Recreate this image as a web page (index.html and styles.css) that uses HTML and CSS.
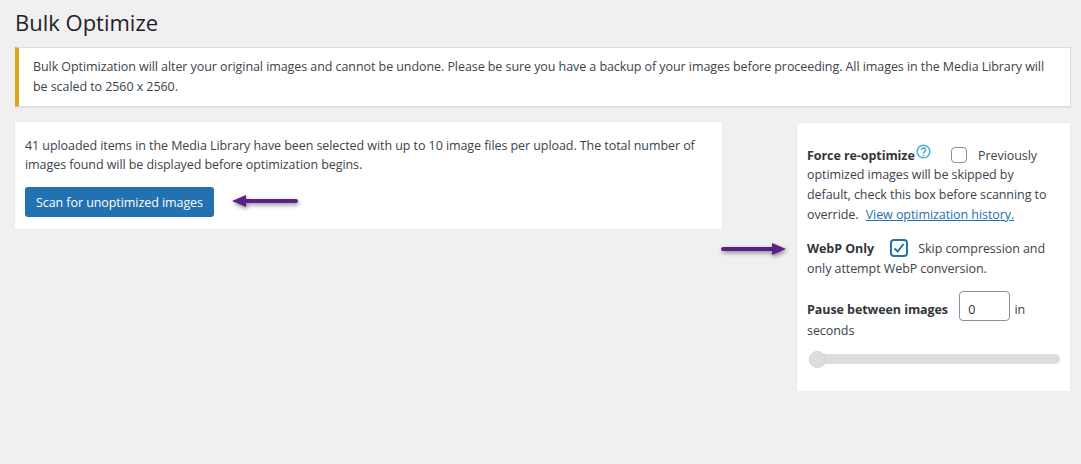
FILE: index.html
```html
<!DOCTYPE html>
<html lang="en">
<head>
  <meta charset="UTF-8">
  <title>Bulk Optimize</title>
  <link rel="stylesheet" href="styles.css">
</head>
<body>
  <div class="wrap">
    <h1 class="page-title">Bulk Optimize</h1>
    <div class="notice">
      <p>Bulk Optimization will alter your original images and cannot be undone. Please be sure you have a backup of your images before proceeding. All images in the Media Library will be scaled to 2560 x 2560.</p>
    </div>
    <div class="columns">
      <div class="card scan-card">
        <p>41 uploaded items in the Media Library have been selected with up to 10 image files per upload. The total number of images found will be displayed before optimization begins.</p>
        <div class="scan-row">
          <button class="scan-button">Scan for unoptimized images</button>
          <svg class="arrow" width="68" height="18" viewBox="0 0 68 18">
            <path class="arrow-fill" d="M1 8 L15 2 V6 H65 a2 2 0 0 1 0 4 H15 V14 Z"/>
          </svg>
        </div>
      </div>
      <div class="card options-card">
        <div class="option">
          <strong>Force re-optimize</strong><svg class="help" width="15" height="15" viewBox="0 0 15 15">
            <circle cx="7.500" cy="7.500" r="6.300"/>
            <path d="M5.300 6 a2.200 2.100 0 1 1 3.300 1.800 c-.8.500 -1.100.8 -1.100 1.700"/>
            <circle class="help-dot" cx="7.500" cy="11.300" r=".9"/>
          </svg>
          <span class="box"></span>
          <span class="option-text">Previously optimized images will be skipped by default, check this box before scanning to override.</span>
          <a href="#" class="history-link">View optimization history.</a>
        </div>
        <div class="option webp">
          <strong>WebP Only</strong>
          <span class="box checked">
            <svg width="14" height="14" viewBox="0 0 14 14"><path d="M2.500 7.500 L5.700 10.500 L11.500 3"/></svg>
          </span>
          <span class="option-text">Skip compression and only attempt WebP conversion.</span>
          <svg class="arrow arrow-right" width="68" height="18" viewBox="0 0 68 18">
            <path class="arrow-fill" d="M3 6 H52 V2 L66 8 L52 14 V10 H3 a2 2 0 0 1 0 -4 Z"/>
          </svg>
        </div>
        <div class="option pause">
          <strong>Pause between images</strong>
          <span class="number-input">0</span>
          <span class="option-text">in seconds</span>
        </div>
        <div class="slider"><span class="slider-handle"></span></div>
      </div>
    </div>
  </div>
</body>
</html>
```

FILE: styles.css
```css
html, body {
  margin: 0;
  background-color: #f0f0f1;
}

body {
  font-family: "Open Sans", "Noto Sans", sans-serif;
  font-size: 12.500px;
  letter-spacing: -0.070px;
  line-height: 19.800px;
  color: #3c434a;
}

p {
  margin: 0;
}

.wrap {
  padding: 0 10px 0 15px;
}

.page-title {
  margin: 0;
  padding-top: 7px;
  height: 40px;
  font-size: 22px;
  font-weight: 400;
  letter-spacing: 0;
  line-height: 30px;
  color: #1d2327;
}

.notice {
  background-color: #fff;
  border: 1px solid #dcdcde;
  border-left: 4px solid #dba617;
  padding: 9px 14px;
  box-shadow: 0 1px 1px rgba(0, 0, 0, 0.04);
}

.columns {
  display: flex;
  justify-content: space-between;
  align-items: flex-start;
  margin-top: 15px;
}

.card {
  background-color: #fff;
  box-shadow: 0 0 1px rgba(0, 0, 0, 0.15);
}

.scan-card {
  width: 687px;
  padding: 14px 10px 12px;
}

.scan-row {
  display: flex;
  align-items: center;
  margin-top: 12px;
}

.scan-button {
  height: 30px;
  padding: 0 11px;
  background-color: #2271b1;
  color: #fff;
  border: none;
  border-radius: 3px;
  font-family: inherit;
  font-size: 12.500px;
  letter-spacing: -0.070px;
}

.arrow {
  margin-left: 17px;
  filter: drop-shadow(1px 2px 2px rgba(0, 0, 0, 0.45));
}

.arrow-fill {
  fill: #5c1f8a;
}

.options-card {
  position: relative;
  width: 253px;
  height: 245px;
  padding: 11px 10px 12px;
  margin: 1px 1px 0 0;
}

.option {
  margin-top: 10px;
  padding-right: 8px;
}

.option strong {
  font-weight: 700;
  color: #32373c;
}

.help {
  vertical-align: 1px;
  margin-left: 1px;
  fill: none;
  stroke: #4db2d6;
  stroke-width: 1.600;
}

.help-dot {
  fill: #4db2d6;
  stroke: none;
}

.box {
  display: inline-block;
  box-sizing: border-box;
  width: 16px;
  height: 16px;
  margin: 0 8px 0 17px;
  vertical-align: -3px;
  background-color: #fff;
  border: 1px solid #8c8f94;
  border-radius: 4px;
}

.box.checked {
  width: 18px;
  height: 18px;
  border: 2px solid #2271b1;
  margin: 0 7px 0 13px;
  vertical-align: -4px;
}

.box.checked svg {
  display: block;
  fill: none;
  stroke: #2271b1;
  stroke-width: 2;
}

.history-link {
  margin-left: 4px;
  color: #2271b1;
}

.webp {
  margin-top: 14px;
}

.arrow-right {
  position: absolute;
  left: -77px;
  top: 118px;
  margin: 0;
}

.pause {
  margin-top: 21px;
}

.number-input {
  display: inline-block;
  box-sizing: border-box;
  width: 51px;
  height: 30px;
  margin: -8px 1px 0 8px;
  padding: 8px 8px 0;
  background-color: #fff;
  border: 1px solid #8c8f94;
  border-radius: 4px;
  color: #2c3338;
}

.slider {
  position: relative;
  height: 10px;
  margin: 13px 0 0 2px;
  background-color: #dddddd;
  border-radius: 5px;
}

.slider-handle {
  position: absolute;
  left: 0;
  top: -3px;
  width: 15px;
  height: 15px;
  background-color: #dddddd;
  border: 1px solid #d3d3d3;
  border-radius: 50%;
}
```
